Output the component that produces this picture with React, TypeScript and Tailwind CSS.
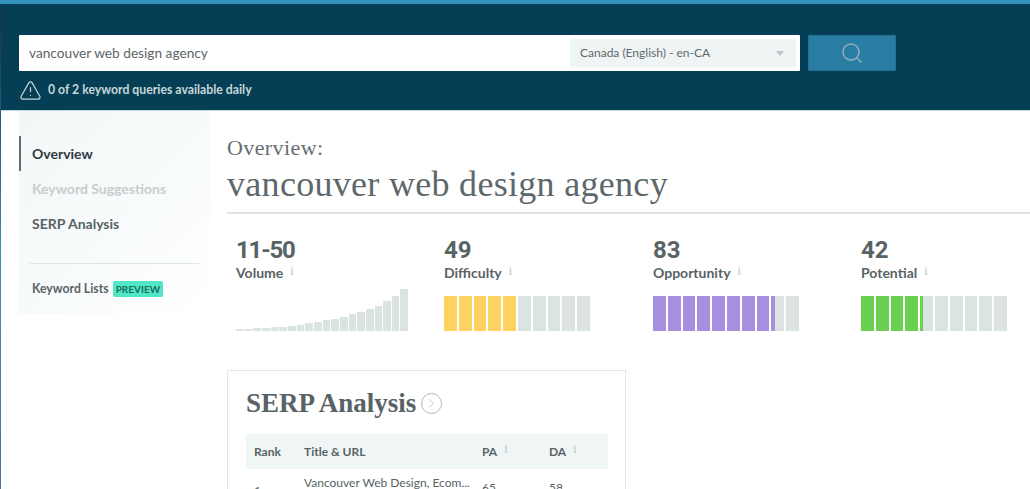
import { ChevronRight, Search, TriangleAlert } from 'lucide-react';

const LATO = "font-['Lato','Liberation_Sans',sans-serif]";

const volumeBars = [2, 2, 3, 3, 4, 4, 5, 6, 8, 9, 11, 12, 14, 17, 19, 22, 25, 30, 35, 42];

function Info() {
  return <sup className="ml-[7px] text-[12px] font-normal text-[#b9c4c4] font-['Liberation_Serif',serif] relative -top-[3px]">i</sup>;
}

function SegmentBar({ fill, color }: { fill: number; color: string }) {
  return (
    <div className="flex gap-[2px] w-[146px] h-[35px]">
      {Array.from({ length: 10 }).map((_, i) => {
        const part = Math.max(0, Math.min(1, fill - i));
        return (
          <div key={i} className="flex-1 bg-[#dbe4e3] overflow-hidden">
            <div className="h-full" style={{ width: `${part * 100}%`, backgroundColor: color }} />
          </div>
        );
      })}
    </div>
  );
}

function Metric({ value, label, tight, children }: { value: string; label: string; tight?: boolean; children: React.ReactNode }) {
  return (
    <div>
      <div className={`text-[24px] leading-[28px] font-bold text-[#586366] font-['Roboto',sans-serif] ${tight ? 'tracking-[-1.2px]' : ''}`}>{value}</div>
      <div className="text-[14px] leading-[18px] font-bold text-[#586366]">
        {label}
        <Info />
      </div>
      <div className="mt-[14px]">{children}</div>
    </div>
  );
}

export default function App() {
  return (
    <div className={`relative h-[489px] w-[1030px] overflow-hidden bg-white ${LATO}`}>
      {/* sliver of the desktop behind the window */}
      <div className="absolute left-0 top-[4px] bottom-0 w-px bg-gradient-to-b from-[#1b2a55] via-[#3a8fb0] to-[#55709c]" />

      <div className="h-[111px] bg-[#053f55] border-t-4 border-t-[#3491ba] border-b border-b-[#c5d6da] px-[19px] pt-[31px]">
        <div className="flex gap-2">
          <div className="flex items-center justify-between w-[781px] h-[36px] bg-white rounded-[1px] pl-[10px] pr-1">
            <span className="text-[13.7px] text-[#5b6467]">vancouver web design agency</span>
            <div className="flex items-center justify-between w-[226px] h-[28px] bg-[#eff5f5] rounded-[2px] pl-[10px] pr-3">
              <span className="text-[12px] text-[#5f686b]">Canada (English) - en-CA</span>
              <div className="w-0 h-0 border-x-4 border-x-transparent border-t-[5px] border-t-[#bcc6c6]" />
            </div>
          </div>
          <div className="flex items-center justify-center w-[88px] h-[36px] bg-[#297ca2] border border-[#236f92] rounded-[1px]">
            <Search className="w-[24px] h-[24px] text-[#8fb0bd]" strokeWidth={1.5} />
          </div>
        </div>
        <div className="flex items-center gap-[6px] mt-[8px] text-[#c7d6d8]">
          <TriangleAlert className="w-[23px] h-[23px]" strokeWidth={1.25} />
          <span className="text-[12.25px] font-bold">0 of 2 keyword queries available daily</span>
        </div>
      </div>

      <div className="flex items-start pl-[19px]">
        <aside className="w-[191px] h-[203px] shrink-0 bg-gradient-to-br from-[#f1f7f7] to-white pt-[25px]">
          <div className="flex items-center h-[35px] border-l-2 border-l-[#636b6e] pl-[11px] text-[14px] font-bold text-[#2f3a40]">Overview</div>
          <div className="flex items-center h-[35px] pl-[13px] text-[14px] font-bold text-[#c6cecd]">Keyword Suggestions</div>
          <div className="flex items-center h-[34px] pl-[13px] text-[14px] font-bold text-[#586366]">SERP Analysis</div>
          <div className="h-px bg-[#dfe5e5] mx-[11px] mt-[23px]" />
          <div className="flex items-center gap-[4px] pl-[13px] mt-[16px]">
            <span className="text-[12.25px] font-bold text-[#586366]">Keyword Lists</span>
            <span className="bg-[#50e6c6] rounded-[2px] px-[3px] h-[16px] leading-[16px] text-[10px] font-bold text-[#18715f]">PREVIEW</span>
          </div>
        </aside>

        <main className="flex-1 pl-[17px] pt-[24px]">
          <div className="border-b-2 border-b-[#dde5e4] h-[79px] font-['Liberation_Serif',serif] text-[#5d686b]">
            <div className="text-[22px] leading-[26px] tracking-[0.4px] text-[#666e70]">Overview:</div>
            <div className="text-[36px] leading-[44px] mt-[1px] tracking-[0.3px]">vancouver web design agency</div>
          </div>

          <div className="grid grid-cols-[208px_209px_208px_1fr] pl-[9px] pt-[22px]">
            <Metric value="11-50" label="Volume" tight>
              <div className="flex items-end gap-[1px] w-[172px] h-[42px] -mt-[7px]">
                {volumeBars.map((h, i) => (
                  <div key={i} className="flex-1 bg-[#dbe4e3]" style={{ height: h }} />
                ))}
              </div>
            </Metric>
            <Metric value="49" label="Difficulty">
              <SegmentBar fill={5} color="#ffd161" />
            </Metric>
            <Metric value="83" label="Opportunity">
              <SegmentBar fill={8.3} color="#a78fe0" />
            </Metric>
            <Metric value="42" label="Potential">
              <SegmentBar fill={4.2} color="#6ad04f" />
            </Metric>
          </div>

          <section className="w-[399px] h-[160px] mt-[39px] border border-[#e1e8e7] pl-[18px] pr-[17px] pt-[15px]">
            <div className="flex items-center gap-[5px] h-[34px]">
              <h2 className="text-[27px] font-bold text-[#586366] font-['Liberation_Serif',serif]">SERP Analysis</h2>
              <div className="flex items-center justify-center w-[21px] h-[21px] rounded-full border border-[#a9baba]">
                <ChevronRight className="w-[15px] h-[15px] text-[#a9baba]" strokeWidth={1.25} />
              </div>
            </div>
            <div className="grid grid-cols-[50px_178px_67px_1fr] items-center h-[35px] mt-[14px] bg-[#eff6f5] text-[12px] font-bold text-[#586366] pl-[8px]">
              <span>Rank</span>
              <span>Title &amp; URL</span>
              <span>PA<Info /></span>
              <span>DA<Info /></span>
            </div>
            <div className="grid grid-cols-[50px_178px_67px_1fr] text-[12px] text-[#586366] pl-[8px] pt-[6px]">
              <span className="pt-[7px]">1</span>
              <span className="leading-[16px] whitespace-nowrap">Vancouver Web Design, Ecom...</span>
              <span className="pt-[4px]">65</span>
              <span className="pt-[4px]">58</span>
            </div>
          </section>
        </main>
      </div>
    </div>
  );
}
